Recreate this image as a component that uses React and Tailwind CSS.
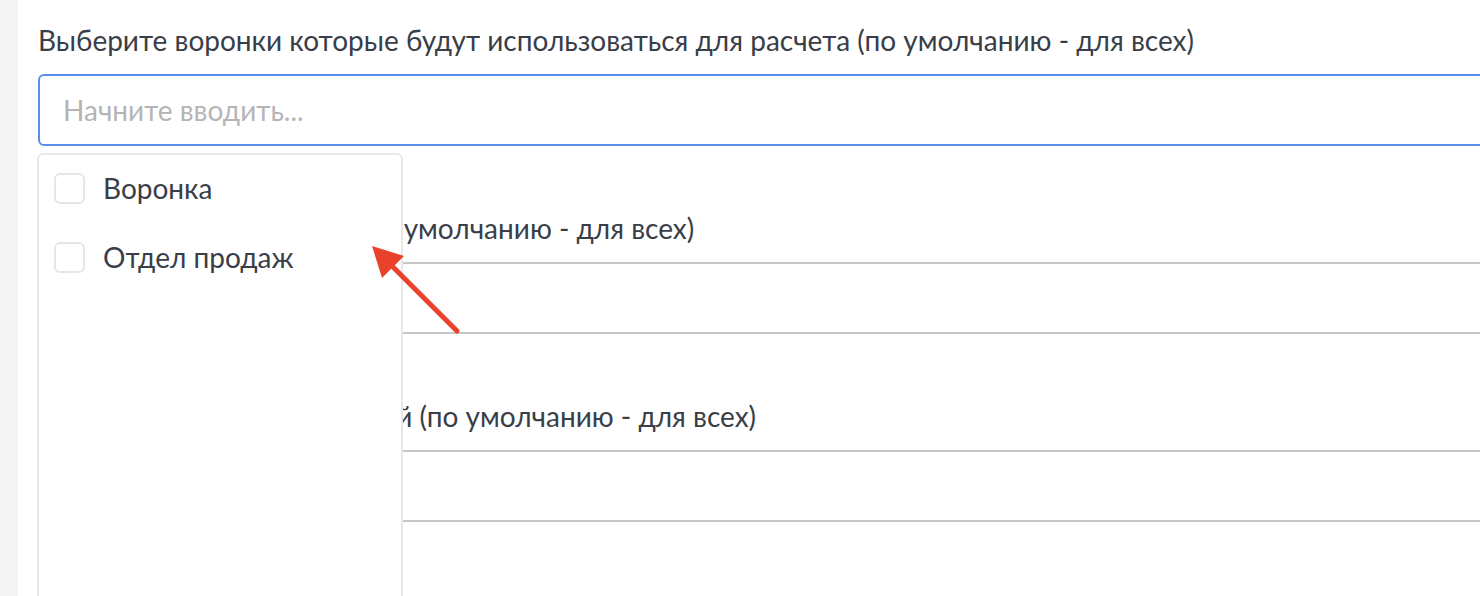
/**
 * Funnel filter — multiselect field with its dropdown opened over the form below.
 */
const FONT = { fontFamily: 'Lato, "Liberation Sans", sans-serif' };

const sections = [
  'Выберите воронки которые будут использоваться для расчета (по умолчанию - для всех)',
  'Выберите этапы сделок (по умолчанию - для всех)',
  'Выберите тип исполнителей (по умолчанию - для всех)',
];

const options = ['Воронка', 'Отдел продаж'];

function Checkbox() {
  return <span className="block h-[31px] w-[31px] shrink-0 rounded-md border-2 border-[#e6e6e6] bg-white" />;
}

function Dropdown() {
  return (
    <div className="absolute left-[-1px] top-[calc(100%+7px)] z-10 h-[480px] w-[366px] rounded-md border-2 border-[#e8e8e8] bg-white px-[15px] pt-[17px]">
      <ul className="flex flex-col gap-[37px]">
        {options.map((opt) => (
          <li key={opt} className="flex items-center gap-[18px]">
            <Checkbox />
            <span className="text-[28px] leading-8 text-[#393e48]">{opt}</span>
          </li>
        ))}
      </ul>
    </div>
  );
}

function Arrow() {
  return (
    <svg className="pointer-events-none absolute left-0 top-0 z-20" width="500" height="360">
      <line x1="457" y1="331" x2="390" y2="264" stroke="#e8432a" strokeWidth="5" strokeLinecap="round" />
      <polygon points="372,246 404,256 382,278" fill="#e8432a" />
    </svg>
  );
}

export default function App() {
  return (
    <div className="relative flex h-[596px] w-[1480px] overflow-hidden bg-white" style={FONT}>
      <div className="w-[18px] shrink-0 bg-[#f4f4f4]" />
      <div className="flex flex-1 flex-col gap-[66px] pl-5 pt-6">
        {sections.map((label, i) => (
          <div key={label}>
            <div className="whitespace-nowrap text-[28px] leading-8 text-[#393e48]">{label}</div>
            <div className="relative mt-[18px]">
              <input
                type="text"
                placeholder={i === 0 ? 'Начните вводить...' : ''}
                className={
                  'block h-[72px] w-[1500px] rounded-md border-2 bg-white px-[23px] text-[28px] text-[#393e48] outline-none placeholder:text-[#b5b5b5] ' +
                  (i === 0 ? 'border-[#5b8ded]' : 'border-[#c6c6c6]')
                }
                style={FONT}
              />
              {i === 0 && <Dropdown />}
            </div>
          </div>
        ))}
      </div>
      <Arrow />
    </div>
  );
}
